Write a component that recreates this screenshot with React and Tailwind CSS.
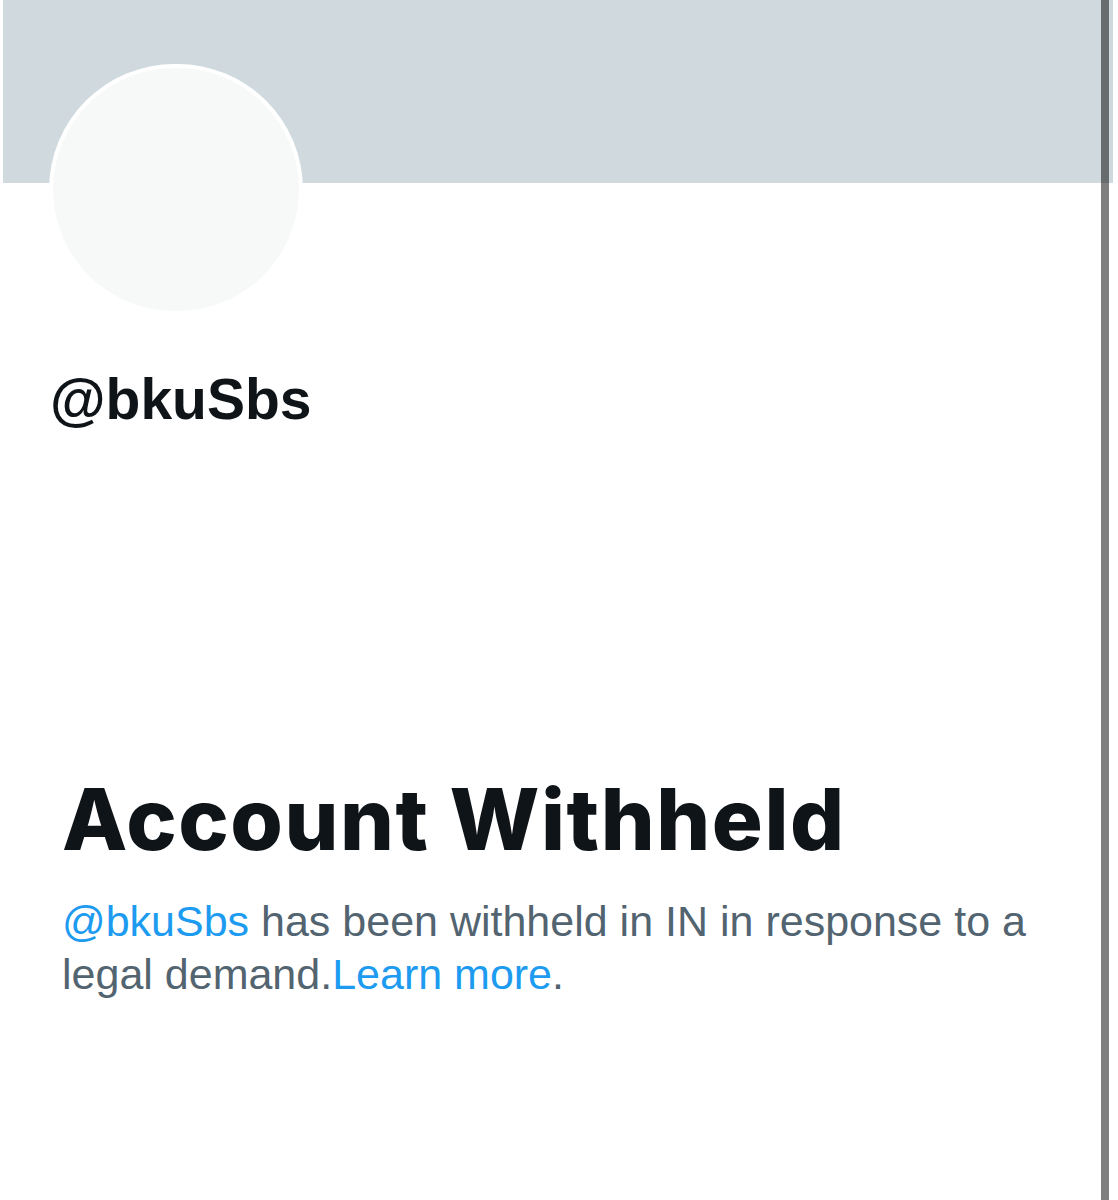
import React from "react";

export default function App() {
  return (
    <div className="relative w-[1118px] h-[1200px] bg-white overflow-hidden" style={{ fontFamily: '"Liberation Sans", Arial, sans-serif' }}>
      <div className="ml-[3px] w-[1110px] h-[183px] bg-[#cfd9de]" />
      <div className="ml-[49px] -mt-[119px] w-[254px] h-[251px] rounded-full bg-white p-[4px]">
        <div className="w-full h-full rounded-full bg-[#f7f9f9]" />
      </div>
      <div className="ml-[50px] mt-[56px] text-[57px] leading-none font-bold text-[#0f1419]">@bkuSbs</div>
      <h1 className="ml-[62px] mt-[349px] text-[85px] leading-none font-extrabold tracking-[1.5px] text-[#0f1419] font-['Inter',sans-serif]">Account Withheld</h1>
      <p className="ml-[62px] mt-[33px] w-[1000px] text-[43px] leading-[53px] text-[#536471]">
        <span className="text-[#1d9bf0]">@bkuSbs</span> has been withheld in IN in response to a
        <br />
        legal demand.<span className="text-[#1d9bf0]">Learn more</span>.
      </p>
      <div className="absolute left-[1101px] top-0 w-[8px] h-[1200px] bg-black/50" />
    </div>
  );
}
